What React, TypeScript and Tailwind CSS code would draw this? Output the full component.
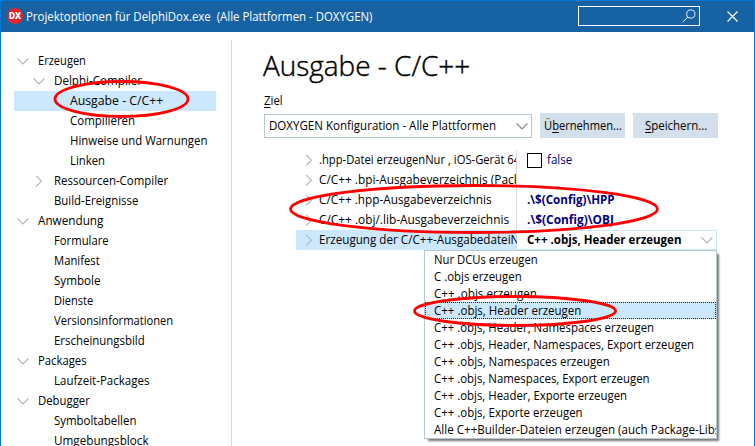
import { useLayoutEffect, useRef, useState } from "react";
import type { ReactNode } from "react";

/** Single-line label condensed to an advance width given in pixels. */
function Label({ w, className = "", children }: { w: number; className?: string; children: ReactNode }) {
  const ref = useRef<HTMLSpanElement>(null);
  const [scale, setScale] = useState(1);
  useLayoutEffect(() => {
    if (ref.current) setScale(w / ref.current.offsetWidth);
  }, [w]);
  return (
    <span className="block shrink-0" style={{ width: w }}>
      <span
        ref={ref}
        className={`inline-block origin-left whitespace-pre ${className}`}
        style={{ transform: `scaleX(${scale})` }}
      >
        {children}
      </span>
    </span>
  );
}

function Chevron({ open = false, dark = false }: { open?: boolean; dark?: boolean }) {
  return (
    <svg width="12" height="12" viewBox="0 0 12 12" fill="none" className={`shrink-0 ${dark ? "stroke-[#868686]" : "stroke-[#b4b4b4]"}`}>
      <path d={open ? "M0.6 3.5 L6 9 L11.4 3.5" : "M3 0.8 L8.4 6.2 L3 11.6"} strokeWidth="1.15" />
    </svg>
  );
}

type Node = { t: string; w: number; level: number; open?: boolean; selected?: boolean };

const tree: Node[] = [
  { t: "Erzeugen", w: 48, level: 0, open: true },
  { t: "Delphi-Compiler", w: 88, level: 1, open: true },
  { t: "Ausgabe - C/C++", w: 93, level: 2, selected: true },
  { t: "Compilieren", w: 65, level: 2 },
  { t: "Hinweise und Warnungen", w: 137, level: 2 },
  { t: "Linken", w: 35, level: 2 },
  { t: "Ressourcen-Compiler", w: 114.5, level: 1, open: false },
  { t: "Build-Ereignisse", w: 84.5, level: 1 },
  { t: "Anwendung", w: 65.5, level: 0, open: true },
  { t: "Formulare", w: 54.5, level: 1 },
  { t: "Manifest", w: 46, level: 1 },
  { t: "Symbole", w: 46.5, level: 1 },
  { t: "Dienste", w: 39.5, level: 1 },
  { t: "Versionsinformationen", w: 119, level: 1 },
  { t: "Erscheinungsbild", w: 90.5, level: 1 },
  { t: "Packages", w: 49, level: 0, open: true },
  { t: "Laufzeit-Packages", w: 95, level: 1 },
  { t: "Debugger", w: 52, level: 0, open: true },
  { t: "Symboltabellen", w: 82, level: 1 },
  { t: "Umgebungsblock", w: 94.5, level: 1 },
];

const indents = ["pl-[2px]", "pl-[18px]", "pl-[34px]"];

const choices: [string, number][] = [
  ["Nur DCUs erzeugen", 103.5],
  ["C .objs erzeugen", 87.5],
  ["C++ .objs erzeugen", 103],
  ["C++ .objs, Header erzeugen", 147],
  ["C++ .objs, Header, Namespaces erzeugen", 220],
  ["C++ .objs, Header, Namespaces, Export erzeugen", 260],
  ["C++ .objs, Namespaces erzeugen", 176],
  ["C++ .objs, Namespaces, Export erzeugen", 216],
  ["C++ .objs, Header, Exporte erzeugen", 193],
  ["C++ .objs, Exporte erzeugen", 149],
  ["Alle C++Builder-Dateien erzeugen (auch Package-Libs", 286],
];

const options: [string, number][] = [
  [".hpp-Datei erzeugenNur , iOS-Gerät 64", 201],
  ["C/C++ .bpi-Ausgabeverzeichnis (Pack", 201],
  ["C/C++ .hpp-Ausgabeverzeichnis", 173],
  ["C/C++ .obj/.lib-Ausgabeverzeichnis", 190],
];

function OptionValue({ index }: { index: number }) {
  if (index === 0)
    return (
      <div className="flex items-center gap-[5px] pl-[10px] text-[#000080]">
        <span className="size-[15px] border border-black bg-white" />
        <Label w={25}>false</Label>
      </div>
    );
  if (index === 1) return null;
  return (
    <div className="pl-[10px] font-bold text-[#000080]">
      <Label w={index === 2 ? 88 : 87}>{index === 2 ? ".\\$(Config)\\HPP" : ".\\$(Config)\\OBJ"}</Label>
    </div>
  );
}

function Sidebar() {
  return (
    <nav className="h-full w-[230px] shrink-0 overflow-hidden pt-[19px] pl-[13px]">
      {tree.map((n) => (
        <div key={n.t} className={`flex h-5 w-[202px] items-center ${indents[n.level]} ${n.selected ? "bg-[#cce8ff]" : ""}`}>
          <span className="flex w-[22px] shrink-0 pl-px">{n.open !== undefined && <Chevron open={n.open} />}</span>
          <Label w={n.w}>{n.t}</Label>
        </div>
      ))}
    </nav>
  );
}

function Dropdown() {
  return (
    <div className="absolute top-[249px] left-[423px] h-[189px] w-[293px] border border-[#b9c9d1] bg-white shadow-[3px_3px_2px_-1px_#777]">
      {choices.map(([t, w], i) => (
        <div
          key={t}
          className={`flex h-[17px] items-center overflow-hidden pt-px pl-[9px] ${i === 3 ? "bg-[#cce8ff] outline-1 -outline-offset-1 outline-dotted outline-[#222]" : ""}`}
        >
          <Label w={w}>{t}</Label>
        </div>
      ))}
    </div>
  );
}

function Marks() {
  return (
    <svg className="pointer-events-none absolute -top-px -left-px" width="755" height="446" fill="none" stroke="#ff0000" strokeWidth="2.8">
      <ellipse cx="121.5" cy="99" rx="66.5" ry="17.5" />
      <ellipse cx="474" cy="209" rx="183.5" ry="23.5" />
      <ellipse cx="515" cy="311" rx="100.5" ry="14.5" />
    </svg>
  );
}

export default function App() {
  return (
    <div className="relative flex h-[446px] w-[755px] flex-col overflow-hidden border-x border-t border-[#0078d7] bg-white font-['Open_Sans','Noto_Sans',sans-serif] text-[12px] leading-4 text-black">
      <header className="flex h-[31px] shrink-0 items-center bg-[#1662a3] pl-[6px] text-white">
        <span className="mr-[3px] mb-[2px] flex size-4 shrink-0 items-center justify-center rounded-full bg-[#e3242b] font-['Roboto'] text-[9.5px] font-black">
          DX
        </span>
        <Label w={346.5}>{"Projektoptionen für DelphiDox.exe  (Alle Plattformen - DOXYGEN)"}</Label>
        <div className="ml-auto mb-px flex h-5 w-[122px] items-center justify-end border border-white pr-[3px]">
          <svg width="14" height="14" viewBox="0 0 14 14" fill="none" stroke="#e5eef5" strokeWidth="1">
            <circle cx="8.8" cy="5" r="4.1" />
            <path d="M5.8 8 L0.7 13.2" />
          </svg>
        </div>
        <svg className="mr-[16px] mb-px ml-[27px]" width="11" height="11" viewBox="0 0 11 11" stroke="white" strokeWidth="1.2">
          <path d="M0.5 0.5 L10.5 10.5 M10.5 0.5 L0.5 10.5" />
        </svg>
      </header>
      <div className="flex min-h-0 flex-1">
        <Sidebar />
        <div className="mt-2 w-px shrink-0 bg-[#d3dde6]" />
        <main className="min-w-0 flex-1">
          <h1 className="mt-[16px] ml-[31px] h-9 text-[27px] leading-9 font-light [-webkit-text-stroke:0.4px_black]">
            <Label w={207}>Ausgabe - C/C++</Label>
          </h1>
          <div className="mt-[9px] ml-[32px] h-4">
            <Label w={19}><u className="underline-offset-2">Z</u>iel</Label>
          </div>
          <div className="mt-[4px] ml-[32px] flex h-[25px] items-end">
            <div className="flex h-6 w-[268px] items-center justify-between border border-[#b9c9d1] pr-[3px] pl-[4px]">
              <Label w={227}>DOXYGEN Konfiguration - Alle Plattformen</Label>
              <Chevron open dark />
            </div>
            <button className="ml-[8px] flex h-[25px] w-[85px] items-center justify-center bg-[#d3dfea]">
              <Label w={78}>Ü<u className="underline-offset-2">b</u>ernehmen...</Label>
            </button>
            <button className="ml-[8px] flex h-[25px] w-[85px] items-center justify-center bg-[#d3dfea]">
              <Label w={62}><u className="underline-offset-2">S</u>peichern...</Label>
            </button>
          </div>
          <div className="mt-[12px] ml-[64px] w-[421px]">
            {options.map(([t, w], i) => (
              <div key={t} className="flex h-5 items-center">
                <div className="flex h-5 w-[221px] shrink-0 items-center gap-[4px] overflow-hidden border-r border-[#dadada] pl-[7px]">
                  <Chevron />
                  <Label w={w}>{t}</Label>
                </div>
                <OptionValue index={i} />
              </div>
            ))}
            <div className="flex h-5 items-center border border-[#cce8ff]">
              <div className="flex h-5 w-[220px] shrink-0 items-center gap-[4px] overflow-hidden bg-[#cce8ff] pl-[6px]">
                <Chevron />
                <Label w={200}>Erzeugung der C/C++-AusgabedateiN</Label>
              </div>
              <div className="flex flex-1 items-center justify-between pr-[3px] pl-[10px] font-bold">
                <Label w={154.5}>C++ .objs, Header erzeugen</Label>
                <Chevron open />
              </div>
            </div>
          </div>
        </main>
      </div>
      <Dropdown />
      <Marks />
    </div>
  );
}
